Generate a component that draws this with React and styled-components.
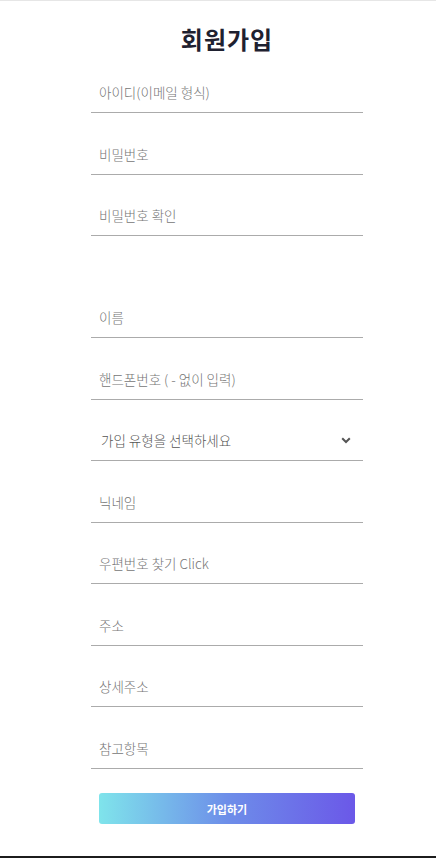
import styled, { createGlobalStyle } from 'styled-components';

const GlobalStyle = createGlobalStyle`
    html, body {
        margin: 0;
        padding: 0;
        background: #fff;
        font-family: "Noto Sans CJK KR", "Noto Sans", sans-serif;
    }
    * {
        box-sizing: border-box;
    }
`;

const fields = [
    { name: 'id', placeholder: '아이디(이메일 형식)' },
    { name: 'pw', placeholder: '비밀번호', type: 'password' },
    { name: 'pwCheck', placeholder: '비밀번호 확인', type: 'password', spaced: true },
    { name: 'name', placeholder: '이름' },
    { name: 'phone', placeholder: '핸드폰번호 ( - 없이 입력)' },
];

const fieldsAfter = [
    { name: 'nick', placeholder: '닉네임' },
    { name: 'zip', placeholder: '우편번호 찾기 Click' },
    { name: 'addr', placeholder: '주소' },
    { name: 'addrDetail', placeholder: '상세주소' },
    { name: 'extra', placeholder: '참고항목' },
];

export default function App() {
    return (
        <>
            <GlobalStyle />
            <Page>
                <Title>회원가입</Title>
                <Form onSubmit={(e) => e.preventDefault()}>
                    {fields.map((f) => (
                        <Input
                            key={f.name}
                            type={f.type || 'text'}
                            placeholder={f.placeholder}
                            $spaced={f.spaced}
                        />
                    ))}
                    <SelectWrap>
                        <Select defaultValue="">
                            <option value="" disabled>가입 유형을 선택하세요</option>
                            <option value="user">일반회원</option>
                            <option value="seller">판매자</option>
                        </Select>
                        <Chevron viewBox="0 0 10 7" width="10" height="7">
                            <path d="M1.2 1.2 L5 5 L8.8 1.2" fill="none" stroke="#555" strokeWidth="2" />
                        </Chevron>
                    </SelectWrap>
                    {fieldsAfter.map((f) => (
                        <Input key={f.name} type="text" placeholder={f.placeholder} />
                    ))}
                    <SubmitButton type="submit">가입하기</SubmitButton>
                </Form>
                <Footer />
            </Page>
        </>
    );
}

const Page = styled.div`
    display: flex;
    flex-direction: column;
    align-items: center;
    width: 100%;
    min-height: 858px;
    padding-left: 18px;
    border-top: 1px solid #e6e6e6;
`;

const Title = styled.h1`
    margin: 20px 0 0;
    height: 35px;
    line-height: 35px;
    font-size: 24px;
    font-weight: 700;
    color: #1f2130;
    letter-spacing: 1px;
`;

const Form = styled.form`
    display: flex;
    flex-direction: column;
    width: 272px;
    margin-top: 16px;
`;

const Input = styled.input`
    width: 100%;
    height: 41px;
    margin-bottom: ${(p) => (p.$spaced ? '61px' : '20.5px')};
    padding: 0 8px;
    border: none;
    border-bottom: 1px solid #ababab;
    outline: none;
    font-family: inherit;
    font-size: 13.5px;
    font-weight: 300;
    color: #333;
    background: transparent;
    &::placeholder {
        color: #767676;
    }
`;

const SelectWrap = styled.div`
    position: relative;
    width: 100%;
    margin-bottom: 20.5px;
`;

const Select = styled.select`
    appearance: none;
    width: 100%;
    height: 41px;
    padding: 0 10px;
    border: none;
    border-bottom: 1px solid #ababab;
    border-radius: 0;
    outline: none;
    background: transparent;
    font-family: inherit;
    font-size: 13.5px;
    font-weight: 300;
    color: #555;
`;

const Chevron = styled.svg`
    position: absolute;
    right: 12px;
    top: 17px;
    pointer-events: none;
`;

const SubmitButton = styled.button`
    align-self: center;
    width: 256px;
    height: 31px;
    margin-top: 4px;
    border: none;
    border-radius: 3px;
    background: linear-gradient(90deg, #7fe4eb 0%, #6d8ee9 50%, #6b58e8 100%);
    color: #fff;
    font-family: inherit;
    font-size: 11px;
    font-weight: 700;
    cursor: pointer;
`;

const Footer = styled.div`
    width: calc(100% + 18px);
    margin-left: -18px;
    margin-top: auto;
    height: 2px;
    background: #1c1c1c;
`;
